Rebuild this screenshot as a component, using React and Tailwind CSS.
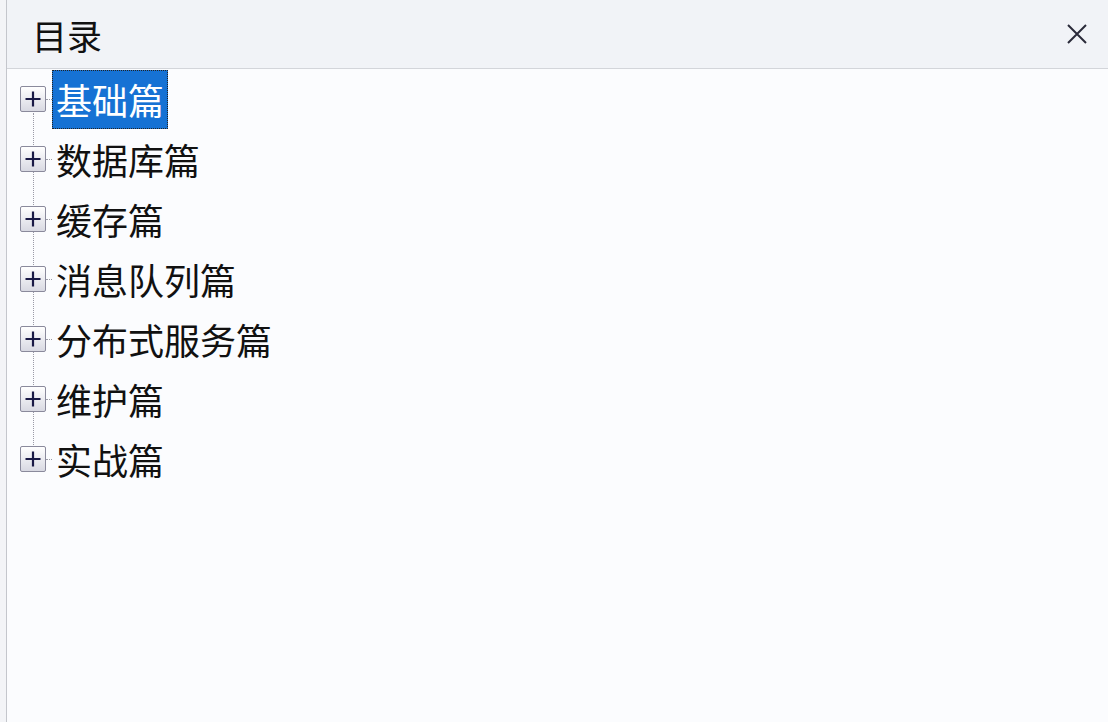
const items = ['基础篇', '数据库篇', '缓存篇', '消息队列篇', '分布式服务篇', '维护篇', '实战篇']

function PlusBox() {
  return (
    <span className="relative flex h-[26px] w-[26px] shrink-0 items-center justify-center rounded-[2px] border border-[#8a8a9c] bg-gradient-to-b from-white to-[#d8d9e2]">
      <svg width="18" height="18" viewBox="0 0 18 18">
        <path d="M9 1.5v15M1.5 9h15" stroke="#1a1a46" strokeWidth="2.2" />
      </svg>
    </span>
  )
}

export default function App() {
  return (
    <div className="h-[722px] w-[1108px] overflow-hidden bg-[#f3f4f7] pl-[6px]" style={{ fontFamily: '"Noto Sans CJK SC", "Noto Sans", sans-serif' }}>
      <div className="flex h-full flex-col border-l border-[#c4c6cc] bg-[#fbfcfe]">
        <div className="flex h-[69px] shrink-0 items-center justify-between border-b border-[#d3d5da] bg-[#f1f3f7] pl-[25px] pr-[20px]">
          <span className="text-[35px] leading-none text-[#111]">目录</span>
          <svg width="22" height="22" viewBox="0 0 22 22">
            <path d="M2 2l18 18M20 2L2 20" stroke="#2a2a3a" strokeWidth="2" />
          </svg>
        </div>
        <div className="relative flex flex-col pl-[13px]">
          <div className="absolute left-[26px] top-[44px] h-[346px] border-l border-dotted border-[#9a9aa6]" />
          {items.map((t, i) => (
            <div key={t} className="flex h-[60px] items-center">
              <PlusBox />
              <span className="w-[6px] border-t border-dotted border-[#9a9aa6]" />
              <span
                className={
                  i === 0
                    ? 'flex h-[59px] items-center border border-dotted border-[#222] bg-[#1672d4] px-[3px] text-[36px] text-white'
                    : 'px-[4px] text-[36px] text-[#111]'
                }
              >
                {t}
              </span>
            </div>
          ))}
        </div>
      </div>
    </div>
  )
}
